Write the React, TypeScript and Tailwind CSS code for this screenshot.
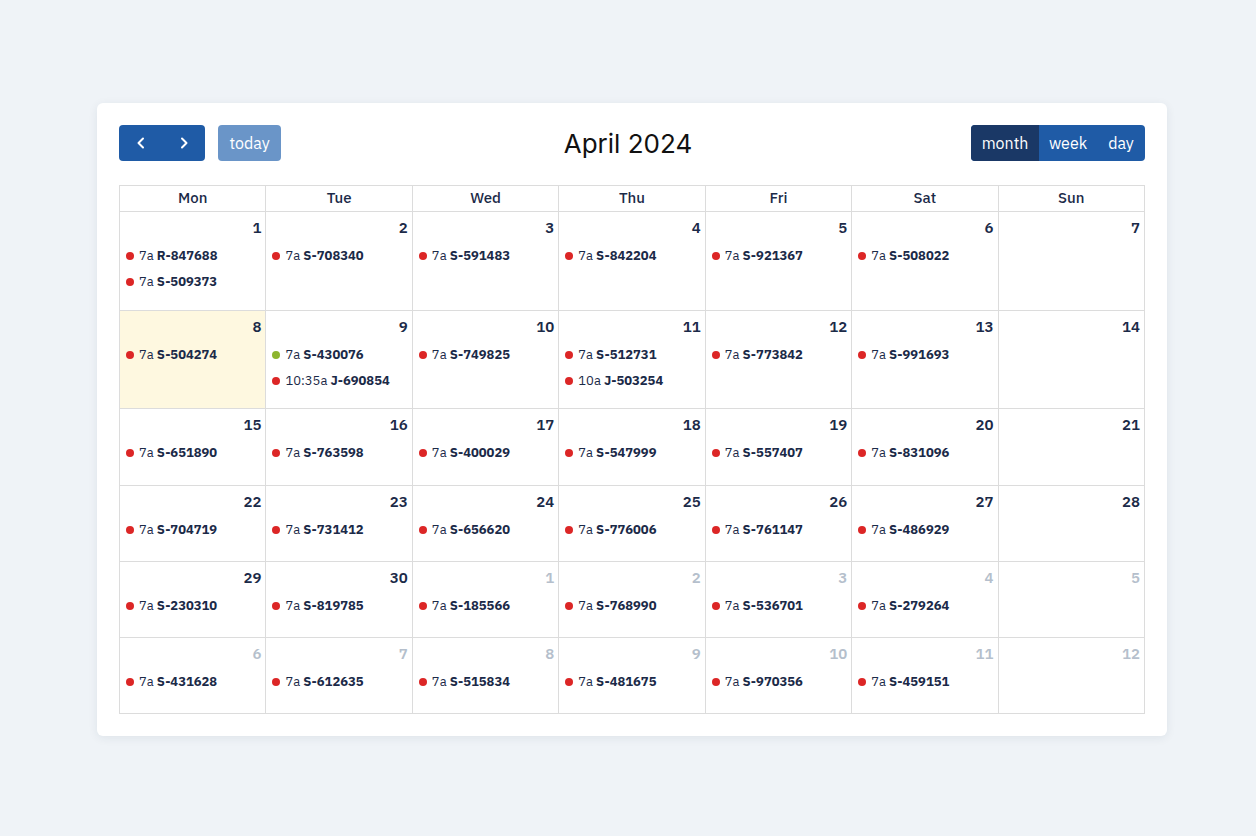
import * as React from "react";

type Ev = { time: string; code: string; color?: "red" | "green" };
type Day = { n: number; other?: boolean; today?: boolean; events: Ev[] };

const e = (code: string, time = "7a", color: "red" | "green" = "red"): Ev => ({ time, code, color });

const weeks: { h: string; days: Day[] }[] = [
  {
    h: "h-[99px]",
    days: [
      { n: 1, events: [e("R-847688"), e("S-509373")] },
      { n: 2, events: [e("S-708340")] },
      { n: 3, events: [e("S-591483")] },
      { n: 4, events: [e("S-842204")] },
      { n: 5, events: [e("S-921367")] },
      { n: 6, events: [e("S-508022")] },
      { n: 7, events: [] },
    ],
  },
  {
    h: "h-[98px]",
    days: [
      { n: 8, today: true, events: [e("S-504274")] },
      { n: 9, events: [e("S-430076", "7a", "green"), e("J-690854", "10:35a")] },
      { n: 10, events: [e("S-749825")] },
      { n: 11, events: [e("S-512731"), e("J-503254", "10a")] },
      { n: 12, events: [e("S-773842")] },
      { n: 13, events: [e("S-991693")] },
      { n: 14, events: [] },
    ],
  },
  {
    h: "h-[77px]",
    days: [
      { n: 15, events: [e("S-651890")] },
      { n: 16, events: [e("S-763598")] },
      { n: 17, events: [e("S-400029")] },
      { n: 18, events: [e("S-547999")] },
      { n: 19, events: [e("S-557407")] },
      { n: 20, events: [e("S-831096")] },
      { n: 21, events: [] },
    ],
  },
  {
    h: "h-[76px]",
    days: [
      { n: 22, events: [e("S-704719")] },
      { n: 23, events: [e("S-731412")] },
      { n: 24, events: [e("S-656620")] },
      { n: 25, events: [e("S-776006")] },
      { n: 26, events: [e("S-761147")] },
      { n: 27, events: [e("S-486929")] },
      { n: 28, events: [] },
    ],
  },
  {
    h: "h-[76px]",
    days: [
      { n: 29, events: [e("S-230310")] },
      { n: 30, events: [e("S-819785")] },
      { n: 1, other: true, events: [e("S-185566")] },
      { n: 2, other: true, events: [e("S-768990")] },
      { n: 3, other: true, events: [e("S-536701")] },
      { n: 4, other: true, events: [e("S-279264")] },
      { n: 5, other: true, events: [] },
    ],
  },
  {
    h: "h-[76px]",
    days: [
      { n: 6, other: true, events: [e("S-431628")] },
      { n: 7, other: true, events: [e("S-612635")] },
      { n: 8, other: true, events: [e("S-515834")] },
      { n: 9, other: true, events: [e("S-481675")] },
      { n: 10, other: true, events: [e("S-970356")] },
      { n: 11, other: true, events: [e("S-459151")] },
      { n: 12, other: true, events: [] },
    ],
  },
];

const dayNames = ["Mon", "Tue", "Wed", "Thu", "Fri", "Sat", "Sun"];

function Chevron({ dir }: { dir: "left" | "right" }) {
  return (
    <svg width="14" height="14" viewBox="0 0 14 14" fill="none" stroke="white" strokeWidth="2" strokeLinecap="round" strokeLinejoin="round">
      {dir === "left" ? <path d="M9 2.5 4.5 7 9 11.5" /> : <path d="M5 2.5 9.5 7 5 11.5" />}
    </svg>
  );
}

function Event({ ev }: { ev: Ev }) {
  return (
    <div className="flex h-[26px] items-center pl-[6px] text-[13px] text-[#1b2a48]">
      <span className={`mr-[5px] h-[8px] w-[8px] shrink-0 rounded-full ${ev.color === "green" ? "bg-[#8db52e]" : "bg-[#dc2626]"}`} />
      <span className="whitespace-nowrap">
        {ev.time} <b className="font-bold">{ev.code}</b>
      </span>
    </div>
  );
}

export default function App() {
  return (
    <div className="min-h-[836px] bg-[#eff3f7] pl-[97px] pt-[103px]" style={{ fontFamily: "'IBM Plex Sans', 'Noto Sans', Inter, sans-serif" }}>
      <div className="w-[1070px] rounded-[6px] bg-white p-[22px] shadow-[0_2px_10px_rgba(30,50,80,0.08)]">
        {/* toolbar */}
        <div className="mb-[24px] flex h-[36px] items-center justify-between">
          <div className="flex w-[340px] items-center gap-[13px]">
            <div className="flex h-[36px] overflow-hidden rounded-[4px] bg-[#1f5ba6]">
              <button className="flex w-[43px] items-center justify-center"><Chevron dir="left" /></button>
              <button className="flex w-[43px] items-center justify-center"><Chevron dir="right" /></button>
            </div>
            <button className="h-[36px] w-[63px] rounded-[4px] bg-[#6a95c8] text-[16px] text-white">today</button>
          </div>
          <h2 className="pr-[8px] text-[26px] font-normal text-[#111]" style={{ fontFamily: "Inter, 'Noto Sans', sans-serif" }}>April 2024</h2>
          <div className="flex w-[340px] justify-end">
            <div className="flex h-[36px] overflow-hidden rounded-[4px] bg-[#1f5ba6] text-[16px] text-white">
              <button className="w-[68px] bg-[#1a3866]">month</button>
              <button className="w-[58px]">week</button>
              <button className="w-[48px]">day</button>
            </div>
          </div>
        </div>

        {/* grid */}
        <div className="border-l border-t border-[#dcdcdc]">
          <div className="grid h-[26px] grid-cols-7">
            {dayNames.map((d) => (
              <div key={d} className="flex items-center justify-center border-b border-r border-[#dcdcdc] text-[15px] font-medium text-[#1b2a48]">
                {d}
              </div>
            ))}
          </div>
          {weeks.map((w, wi) => (
            <div key={wi} className={`grid grid-cols-7 ${w.h}`}>
              {w.days.map((d, di) => (
                <div key={di} className={`border-b border-r border-[#dcdcdc] ${d.today ? "bg-[#fef8e0]" : ""}`}>
                  <div className={`flex h-[31px] items-center justify-end pr-[4px] pt-[2px] text-[15px] font-semibold ${d.other ? "text-[#b5bfcc]" : "text-[#1b2a48]"}`}>
                    {d.n}
                  </div>
                  {d.events.map((ev, ei) => (
                    <Event key={ei} ev={ev} />
                  ))}
                </div>
              ))}
            </div>
          ))}
        </div>
      </div>
    </div>
  );
}
